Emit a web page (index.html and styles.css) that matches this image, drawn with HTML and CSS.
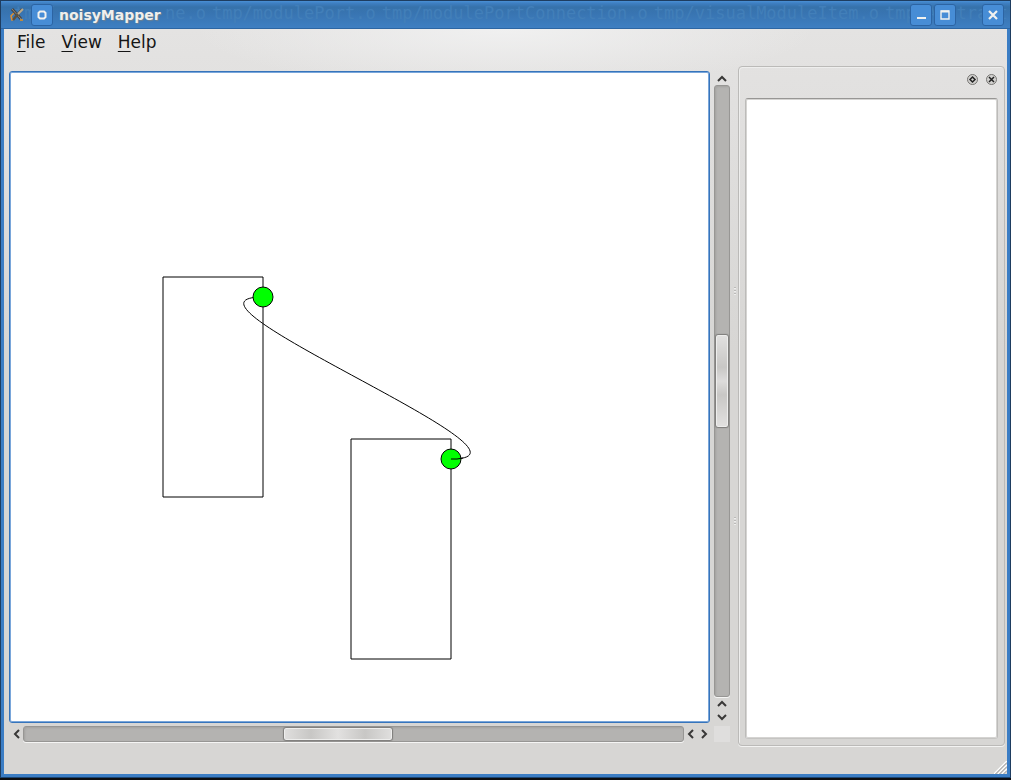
FILE: index.html
```
<!DOCTYPE html>
<html lang="en">
<head>
<meta charset="utf-8">
<title>noisyMapper</title>
<link rel="stylesheet" href="styles.css">
</head>
<body>
<div class="window">
  <header class="titlebar">
    <div class="ghost" aria-hidden="true"><span>tmp/</span><span class="ghost-rest">ne.o</span><span>tmp/modulePort.o</span><span>tmp/modulePortConnection.o</span><span>tmp/visualModuleItem.o</span><span>tmp/Abstract</span></div>
    <svg class="app-icon" width="16" height="16" viewBox="0 0 16 16" aria-hidden="true">
      <path d="M5 6L2 9l1 4 2-1" fill="none" stroke="#e4902c" stroke-width="1.500"/>
      <path d="M3 2l9 10" stroke="#4a4640" stroke-width="3"/>
      <path d="M3 2l9 10" stroke="#8b867c" stroke-width="1"/>
      <path d="M13 2L4 13" stroke="#5b5140" stroke-width="2.500"/>
      <path d="M14 2L9 7" stroke="#b7a98d" stroke-width="2"/>
      <path d="M11 13h3" stroke="#b98a42" stroke-width="2"/>
    </svg>
    <button class="tbtn" aria-label="On all desktops"><svg width="10" height="10" viewBox="0 0 10 10"><path d="M3 1.500h4L8.500 3v4L7 8.500H3L1.500 7V3z" fill="none" stroke="#f2f2ef" stroke-width="2"/></svg></button>
    <h1 class="title">noisyMapper</h1>
    <div class="controls">
      <button class="tbtn" aria-label="Minimize"><svg width="10" height="10" viewBox="0 0 10 10"><path d="M1 8h9" stroke="#f2f2ef" stroke-width="2"/></svg></button>
      <button class="tbtn" aria-label="Maximize"><svg width="10" height="10" viewBox="0 0 10 10"><path d="M1 1h8v8H1z" fill="none" stroke="#f2f2ef" stroke-width="1.400"/><path d="M1 1.500h8" stroke="#f2f2ef" stroke-width="2"/></svg></button>
      <button class="tbtn close" aria-label="Close"><svg width="10" height="10" viewBox="0 0 10 10"><path d="M1 1l8 8M9 1L1 9" stroke="#f2f2ef" stroke-width="2.200"/></svg></button>
    </div>
  </header>
  <div class="client">
    <nav class="menubar">
      <button class="menu"><u>F</u>ile</button>
      <button class="menu"><u>V</u>iew</button>
      <button class="menu"><u>H</u>elp</button>
    </nav>
    <main class="work">
      <section class="view">
        <div class="canvas">
          <svg width="100%" height="100%" aria-label="Module graph">
            <path d="M252 224C141 224 551 386 440 386" fill="none" stroke="#000"/>
            <g fill="none" stroke="#000">
              <path d="M152 204h100v220h-100zM340 366h100v220h-100z"/>
            </g>
            <g fill="#00ff00" stroke="#000">
              <circle cx="252" cy="224" r="10"/>
              <circle cx="440" cy="386" r="10"/>
            </g>
            <path d="M440 386h6l6-1" fill="none" stroke="#000"/>
          </svg>
        </div>
        <div class="scroll vertical">
          <button class="arrow" aria-label="Scroll up"><svg width="10" height="8" viewBox="0 0 10 8"><path d="M1 6l4-4 4 4"/></svg></button>
          <div class="track"><div class="thumb"></div></div>
          <button class="arrow" aria-label="Page up"><svg width="10" height="8" viewBox="0 0 10 8"><path d="M1 6l4-4 4 4"/></svg></button>
          <button class="arrow" aria-label="Scroll down"><svg width="10" height="8" viewBox="0 0 10 8"><path d="M1 2l4 4 4-4"/></svg></button>
        </div>
        <div class="scroll horizontal">
          <button class="arrow" aria-label="Scroll left"><svg width="8" height="10" viewBox="0 0 8 10"><path d="M6 1L2 5l4 4"/></svg></button>
          <div class="track"><div class="thumb"></div></div>
          <button class="arrow" aria-label="Page left"><svg width="8" height="10" viewBox="0 0 8 10"><path d="M6 1L2 5l4 4"/></svg></button>
          <button class="arrow" aria-label="Scroll right"><svg width="8" height="10" viewBox="0 0 8 10"><path d="M2 1l4 4-4 4"/></svg></button>
        </div>
        <div class="corner"></div>
      </section>
      <div class="splitter"><i class="dots"></i><i class="dots"></i></div>
      <aside class="dock">
        <div class="dock-head">
          <button class="dock-btn" aria-label="Float"><svg width="13" height="13" viewBox="0 0 13 13"><circle cx="6.500" cy="6.500" r="5" fill="#d2d1cf" stroke="#777673"/><path d="M6.500 4L9 6.500 6.500 9 4 6.500z" fill="none" stroke="#222" stroke-width="1.500"/></svg></button>
          <button class="dock-btn" aria-label="Close panel"><svg width="13" height="13" viewBox="0 0 13 13"><circle cx="6.500" cy="6.500" r="5" fill="#d2d1cf" stroke="#777673"/><path d="M4 4l5 5M9 4L4 9" stroke="#222" stroke-width="1.500"/></svg></button>
        </div>
        <div class="dock-body"></div>
      </aside>
    </main>
    <footer class="status">
      <svg width="13" height="13" viewBox="0 0 13 13" aria-hidden="true"><path d="M0 13L13 0M4 13l9-9M8 13l5-5" stroke="#fff" stroke-width="1.500"/><path d="M1.500 13L13 1.500M5.500 13L13 5.500M9.500 13L13 9.500" stroke="#999896"/></svg>
    </footer>
  </div>
</div>
</body>
</html>
```
FILE: styles.css
```
* { box-sizing: border-box; }

body {
  margin: 0;
  height: 100vh;
  overflow: hidden;
  background: #0c0d10;
  padding-bottom: 2px;
  font-family: "DejaVu Sans", sans-serif;
}

button {
  border: 0;
  padding: 0;
  background: none;
  font: inherit;
  color: inherit;
}

svg { display: block; }

.window {
  display: flex;
  flex-direction: column;
  height: 100%;
  border: 1px solid #1e3d60;
  border-bottom-color: #1b4572;
  background: #3b7dc4;
}

.titlebar {
  position: relative;
  display: flex;
  align-items: center;
  flex: none;
  height: 28px;
  padding: 0 6px 0 8px;
  overflow: hidden;
  background: linear-gradient(#4a90d6 0, #3f80c3 2px, #3672ab 6px, #3874b1 12px, #3e7fc2 27px, #2d66a3 27px);
}

.ghost {
  position: absolute;
  left: 13px;
  top: 2px;
  display: flex;
  gap: 6px;
  font-family: "DejaVu Sans Mono", monospace;
  font-size: 17px;
  line-height: 20px;
  white-space: nowrap;
  color: #427fb9;
}

.ghost-rest { margin-left: 104px; }

.app-icon, .title, .tbtn { position: relative; }

.tbtn {
  display: grid;
  place-items: center;
  width: 22px;
  height: 22px;
  border: 1px solid #2c64a3;
  border-radius: 3px;
  background: #478dd6;
}

.app-icon + .tbtn { margin-left: 6px; }

.title {
  margin: 0 0 0 6px;
  font-size: 14px;
  line-height: 20px;
  font-weight: bold;
  color: #f0efed;
  text-shadow: 1px 1px 1px #6d8092;
}

.controls {
  display: flex;
  gap: 2px;
  margin-left: auto;
}

.close { margin-left: 24px; }

.client {
  display: flex;
  flex-direction: column;
  flex: 1;
  min-height: 0;
  margin: 0 3px 3px 3px;
  background:
    radial-gradient(ellipse 310px 60px at 50% 0, #f0f0f0, #f0f0f000),
    linear-gradient(#e4e3e2, #e0dfde 100px, #d7d6d4 320px);
}

.menubar {
  display: flex;
  gap: 16px;
  height: 37px;
  padding: 2px 13px 0;
}

.menu {
  height: 22px;
  font-size: 17px;
  line-height: 22px;
  color: #151515;
}

.menu u {
  text-decoration-thickness: 1px;
  text-underline-offset: 3px;
}

.work {
  display: flex;
  flex: 1;
  min-height: 0;
  padding: 0 2px 0 5px;
}

.view {
  flex: 1;
  min-width: 0;
  display: grid;
  grid-template-columns: minmax(0, 1fr) 16px;
  grid-template-rows: minmax(0, 1fr) 16px;
  gap: 3px 4px;
  padding: 5px 0 4px;
}

.canvas {
  min-height: 0;
  border: 1px solid #3674bb;
  border-radius: 3px;
  box-shadow: inset 0 0 0 1px #79a6da;
  padding: 1px;
  background: #fff;
  overflow: hidden;
}

.scroll { display: flex; }
.vertical { flex-direction: column; padding-top: 1px; }
.horizontal { padding-left: 1px; }

.arrow {
  display: grid;
  place-items: center;
  flex: none;
}

.arrow path {
  fill: none;
  stroke: #393837;
  stroke-width: 2;
}

.vertical .arrow { width: 16px; height: 13px; }
.horizontal .arrow { width: 13px; height: 16px; }

.track {
  flex: 1;
  border: 1px solid #979694;
  border-radius: 3px;
  background: #b4b3b1;
  box-shadow: inset 1px 1px 2px #94939188, 0 1px #f5f5f4;
}

.vertical .track { padding-top: 248px; }
.horizontal .track { padding-left: 259px; }

.thumb {
  border: 1px solid #82817f;
  border-radius: 3px;
  box-shadow: inset 0 0 0 1px #eeeeed, 0 0 1px #777;
}

.vertical .thumb {
  height: 26%;
  background: linear-gradient(#e2e1e0, #c8c7c5 35%, #dddcdb 50%, #c8c7c5 65%, #e2e1e0);
}

.horizontal .thumb {
  width: 110px;
  height: 14px;
  background: linear-gradient(90deg, #e0dfde, #c8c7c5 25%, #e2e1e0 50%, #c8c7c5 75%, #e0dfde);
}

.corner { background: #dfdedd; }

.splitter {
  display: flex;
  flex-direction: column;
  align-items: flex-end;
  justify-content: space-evenly;
  width: 8px;
  padding-right: 2px;
}

.dots {
  width: 2px;
  height: 8px;
  background: repeating-linear-gradient(#bbbab8 0 1px, #eeeeed 1px 2px, #dddcdb 2px 3px);
}

.dock {
  display: flex;
  flex-direction: column;
  width: 267px;
  flex: none;
  border: 1px solid #bbbab8;
  border-radius: 4px;
  box-shadow: inset 1px 1px #eeeeed, 0 1px #f3f3f2;
  padding: 0 6px 6px;
}

.dock-head {
  display: flex;
  justify-content: flex-end;
  gap: 6px;
  height: 31px;
  padding-top: 6px;
}

.dock-btn { width: 13px; height: 13px; }

.dock-body {
  flex: 1;
  border: 1px solid #a09f9d;
  border-color: #979694 #bcbbb9 #c5c4c2;
  border-radius: 3px;
  background: #fff;
  box-shadow: inset 0 0 0 1px #d5d4d2;
}

.status {
  display: flex;
  justify-content: flex-end;
  align-items: flex-end;
  flex: none;
  height: 28px;
}
```
